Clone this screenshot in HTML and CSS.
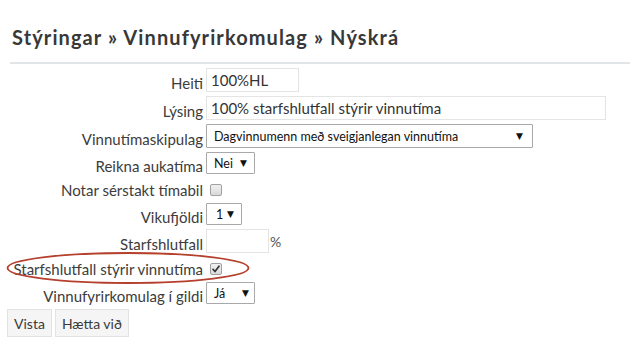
FILE: index.html
```html
<!DOCTYPE html>
<html lang="is">
<head>
<meta charset="utf-8">
<title>Nýskrá</title>
<link rel="stylesheet" href="styles.css">
</head>
<body>
<div class="page">
  <h1 class="title">Stýringar » Vinnufyrirkomulag » Nýskrá</h1>
  <div class="rule"></div>
  <form class="form">
    <label class="lbl">Heiti</label>
    <div class="field"><input class="text w-short" type="text" value="100%HL"></div>

    <label class="lbl">Lýsing</label>
    <div class="field"><input class="text w-long" type="text" value="100% starfshlutfall stýrir vinnutíma"></div>

    <label class="lbl">Vinnutímaskipulag</label>
    <div class="field"><span class="sel sel-wide">Dagvinnumenn með sveigjanlegan vinnutíma</span></div>

    <label class="lbl lbl-sel">Reikna aukatíma</label>
    <div class="field"><span class="sel sel-nei">Nei</span></div>

    <label class="lbl lbl-cb">Notar sérstakt tímabil</label>
    <div class="field field-cb"><span class="cb"></span></div>

    <label class="lbl lbl-sel">Vikufjöldi</label>
    <div class="field"><span class="sel sel-one">1</span></div>

    <label class="lbl">Starfshlutfall</label>
    <div class="field"><input class="text w-pct" type="text" value=""><span class="pct">%</span></div>

    <label class="lbl lbl-cb">Starfshlutfall stýrir vinnutíma</label>
    <div class="field field-cb"><span class="cb"><svg width="8" height="8" viewBox="0 0 8 8"><path d="M1 4.3 L3 6.5 L7 1.2" fill="none" stroke="#333" stroke-width="1.7" stroke-linecap="round" stroke-linejoin="round"/></svg></span></div>

    <label class="lbl lbl-sel">Vinnufyrirkomulag í gildi</label>
    <div class="field"><span class="sel sel-ja">Já</span></div>
  </form>
  <div class="buttons">
    <button class="btn" type="button">Vista</button>
    <button class="btn" type="button">Hætta við</button>
  </div>
  <svg class="circle" width="250" height="40" viewBox="0 0 250 40">
    <ellipse cx="122" cy="16" rx="120.5" ry="15" fill="none" stroke="#b5402e" stroke-width="1.8"/>
  </svg>
</div>
</body>
</html>
```

FILE: styles.css
```css
html, body {
  margin: 0;
  padding: 0;
  background: #ffffff;
}
body {
  font-family: Lato, "Open Sans", sans-serif;
  color: #3a3a3a;
}
.page {
  position: relative;
  width: 632px;
  height: 350px;
  padding: 0 0 0 7px;
  box-sizing: border-box;
}
.title {
  margin: 0;
  padding: 25px 0 0 5px;
  font-size: 20px;
  font-weight: 700;
  letter-spacing: 1.1px;
  line-height: 24px;
  color: #383838;
}
.rule {
  margin: 13px 2px 0 3px;
  height: 2px;
  background: #e0e6e8;
}
.form {
  display: grid;
  grid-template-columns: 196px 1fr;
  column-gap: 3px;
  row-gap: 4px;
  margin-top: 4px;
}
.lbl {
  justify-self: end;
  align-self: end;
  font-size: 15px;
  line-height: 18px;
  color: #3c3c3c;
  white-space: nowrap;
}
.lbl-sel {
  margin-bottom: -1px;
}
.lbl-cb {
  margin-bottom: 0;
}
.field {
  display: flex;
  align-items: center;
}
.field-cb {
  height: 21px;
}
.text {
  height: 24px;
  box-sizing: border-box;
  border: 1px solid #e4e4e4;
  padding: 0 0 0 4px;
  margin: 0;
  font-family: Lato, sans-serif;
  font-size: 15px;
  color: #333;
  background: #fff;
  outline: none;
}
.w-short { width: 93px; }
.w-long { width: 400px; }
.w-pct { width: 63px; }
.pct {
  font-size: 14px;
  color: #555;
  margin-left: 1px;
}
.sel {
  position: relative;
  display: flex;
  align-items: center;
  box-sizing: border-box;
  height: 22px;
  border: 1px solid #a9a9a9;
  border-radius: 1px;
  padding-left: 7px;
  font-size: 12.5px;
  color: #111;
  background: #fff;
}
.sel::after {
  content: "▼";
  position: absolute;
  right: 7px;
  top: 4px;
  font-family: "DejaVu Sans", sans-serif;
  font-size: 9px;
  line-height: 12px;
  color: #111;
}
.sel-wide { width: 327px; height: 24px; }
.sel-wide::after { right: 9px; top: 5px; }
.sel-nei { width: 49px; }
.sel-one { width: 36px; padding-left: 9px; }
.sel-one::after { right: 7px; }
.sel-ja { width: 49px; }
.sel-ja::after { right: 5px; }
.cb {
  display: flex;
  align-items: center;
  justify-content: center;
  width: 12px;
  height: 12px;
  box-sizing: border-box;
  margin-left: 4px;
  margin-top: 2px;
  border: 1px solid #a0a0a0;
  border-radius: 2px;
  background: linear-gradient(#f0f0f0, #dadada);
}
.buttons {
  display: flex;
  gap: 3px;
  margin-top: 5px;
}
.btn {
  height: 28px;
  box-sizing: border-box;
  padding: 0 6px;
  border: 1px solid #e2e2e2;
  border-radius: 0;
  background: #f5f5f5;
  font-family: Lato, sans-serif;
  font-size: 14px;
  color: #3a3a3a;
}
.circle {
  position: absolute;
  left: 6px;
  top: 252px;
}
```
